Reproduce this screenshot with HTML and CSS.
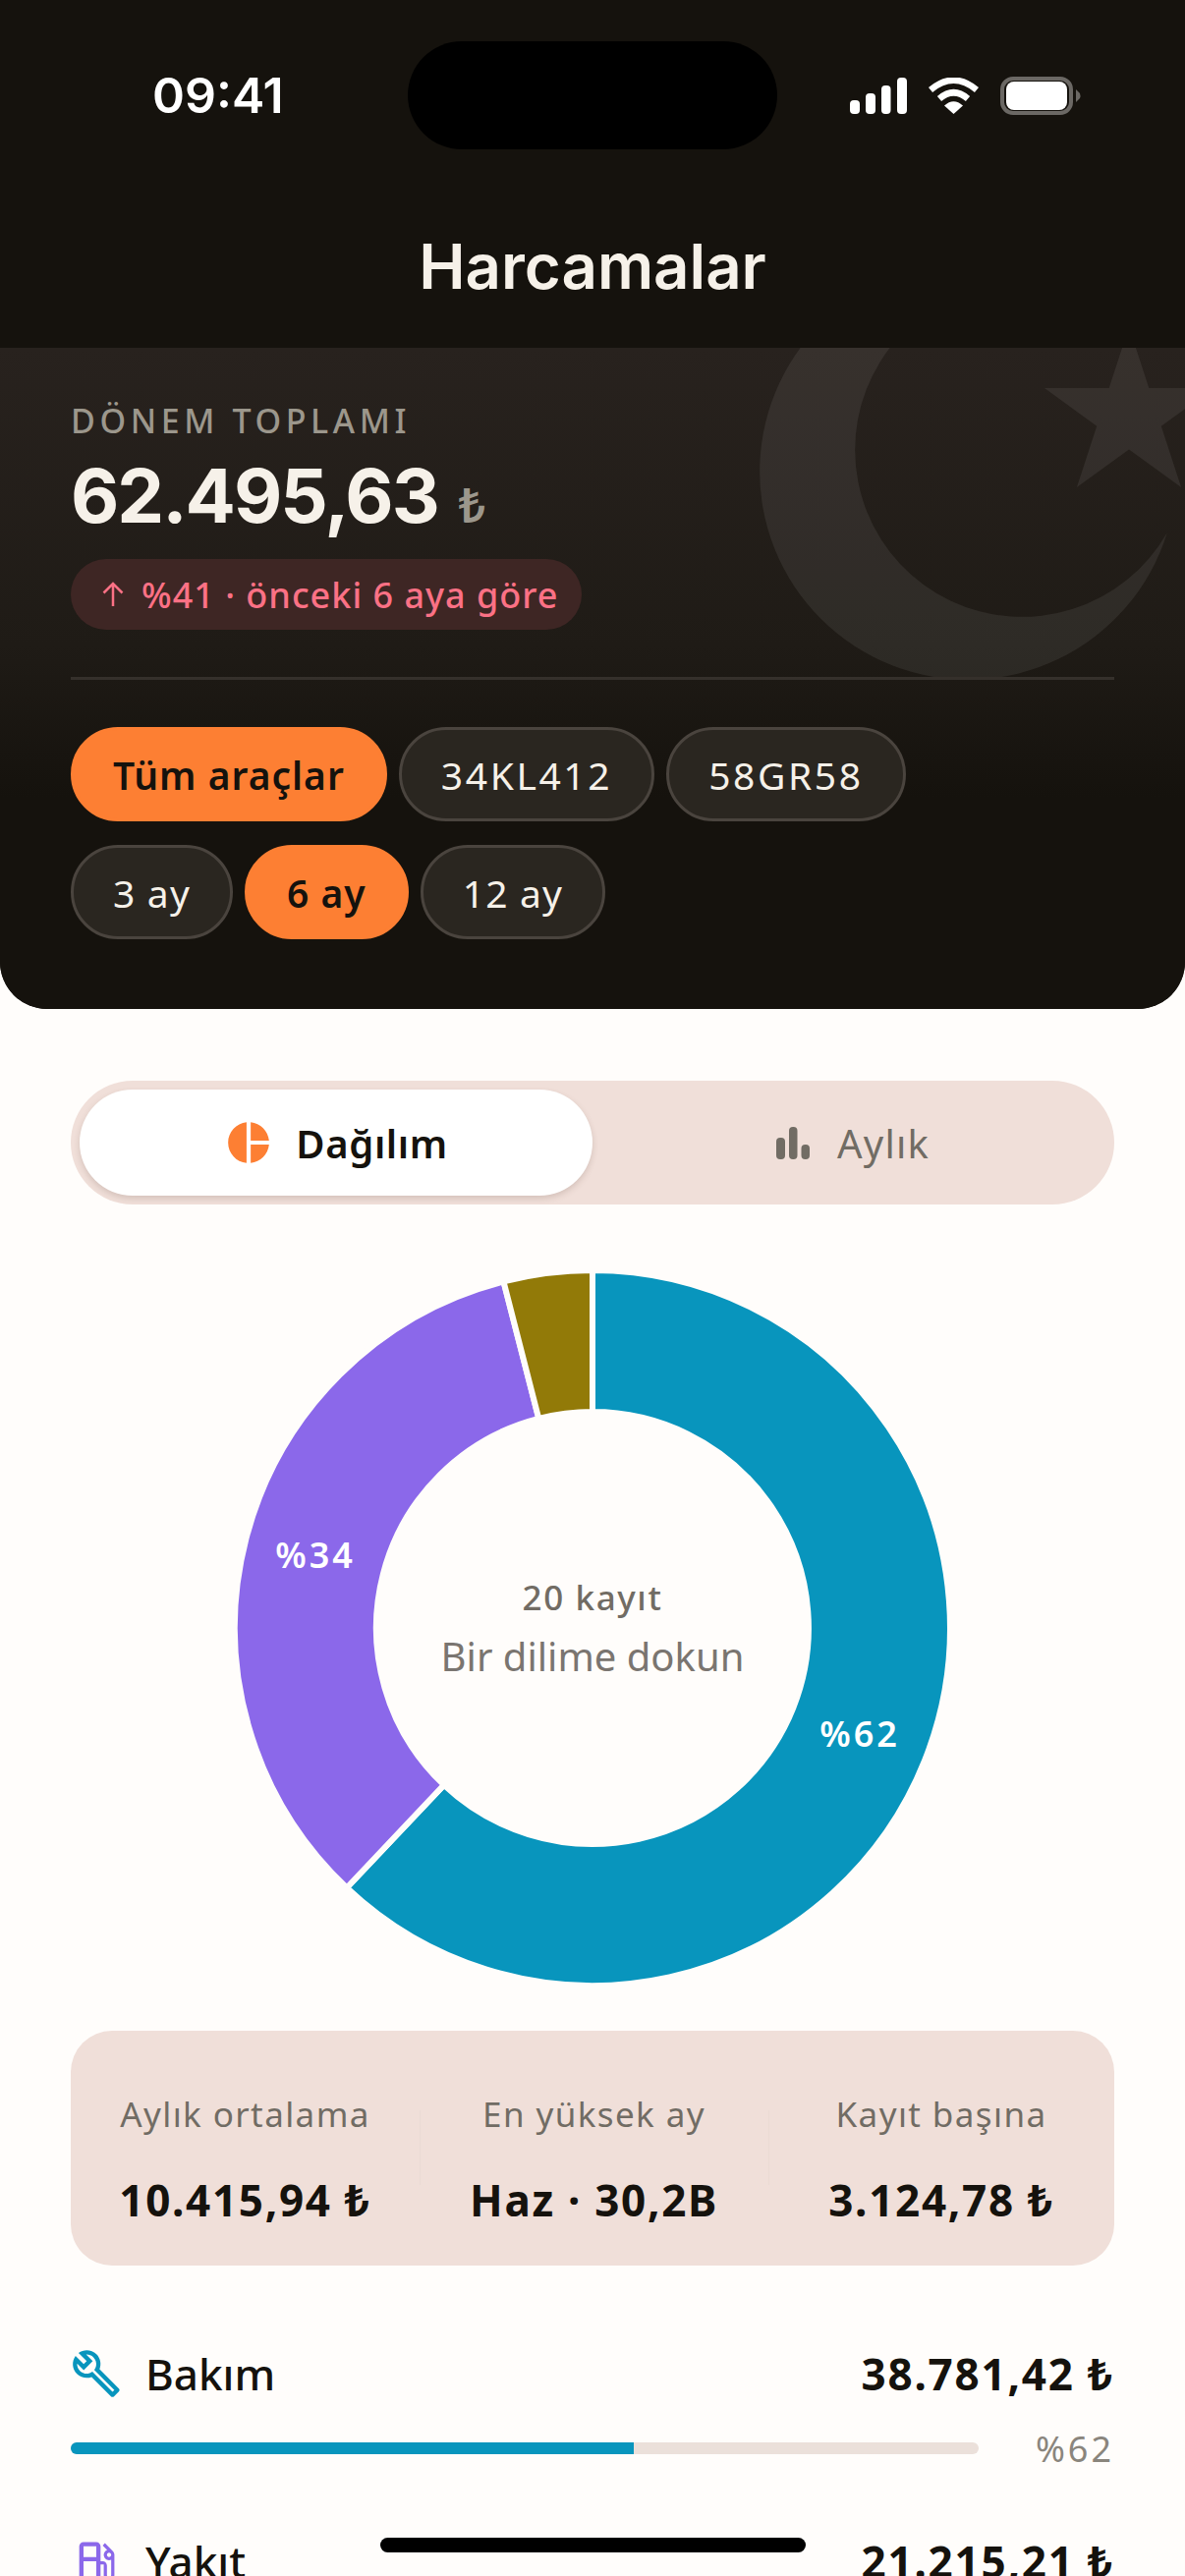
FILE: index.html
```html
<!DOCTYPE html>
<html lang="tr">
<head>
    <meta charset="UTF-8">
    <meta name="viewport" content="width=device-width, initial-scale=1.0">
    <title>Harcamalar</title>
    <link rel="stylesheet" href="styles.css">
</head>
<body>
<div class="screen">
    <header class="hero">
        <div class="status-bar">
            <span class="time">09:41</span>
            <div class="status-icons">
                <svg class="signal" viewBox="0 0 58 37" width="58" height="37">
                    <rect x="0" y="23" width="10" height="14" rx="4"/>
                    <rect x="16" y="16" width="10" height="21" rx="4"/>
                    <rect x="32" y="8" width="9.5" height="29" rx="4"/>
                    <rect x="48" y="0" width="10" height="37" rx="4"/>
                </svg>
                <svg class="wifi" viewBox="0 0 51 37" width="51" height="37">
                    <path d="M2 12.5Q25.5 -7 49 12.5" fill="none" stroke="#fff" stroke-width="6.5"/>
                    <path d="M11 21.5Q25.5 9 40 21.5" fill="none" stroke="#fff" stroke-width="6.5"/>
                    <path d="M25.5 37L16 28.5Q25.5 20 35 28.5Z" fill="#fff"/>
                </svg>
                <svg class="battery" viewBox="0 0 82 39" width="82" height="39">
                    <rect x="2" y="2" width="70" height="35" rx="11" fill="none" stroke="#6b6864" stroke-width="4"/>
                    <rect x="6" y="5" width="62" height="29" rx="8" fill="#fff"/>
                    <path d="M77 13l4 4q1 2.500 0 5l-4 4z" fill="#6b6864"/>
                </svg>
            </div>
        </div>
        <div class="island"></div>
        <h1 class="page-title">Harcamalar</h1>

        <section class="summary">
            <svg class="flag-mark" viewBox="0 0 1206 673" width="1206" height="673">
                <path d="M1187.800 188.200A212 212 0 1 1 1089 -59A170 170 0 1 0 1187.800 188.200Z"/>
                <polygon points="1149,-21.400 1169.300,41.100 1235,41.100 1181.800,79.700 1202.100,142.100 1149,103.500 1095.900,142.100 1116.200,79.700 1063,41.100 1128.700,41.100"/>
            </svg>
            <div class="eyebrow">DÖNEM TOPLAMI</div>
            <div class="total">62.495,63<span class="total-cur">₺</span></div>
            <div class="trend">
                <svg viewBox="0 0 26 26" width="26" height="26" fill="none" stroke="#fb7185" stroke-width="2.500">
                    <path d="M13 25V2M3.500 11.500L13 2l9.500 9.500"/>
                </svg>
                <span>%41 · önceki 6 aya göre</span>
            </div>
            <div class="divider"></div>
            <div class="chip-row">
                <span class="chip chip-active">Tüm araçlar</span>
                <span class="chip chip-plate">34KL412</span>
                <span class="chip chip-plate">58GR58</span>
            </div>
            <div class="chip-row">
                <span class="chip">3 ay</span>
                <span class="chip chip-active">6 ay</span>
                <span class="chip">12 ay</span>
            </div>
        </section>
    </header>

    <main class="content">
        <div class="segmented">
            <div class="segment segment-active">
                <svg viewBox="0 0 24 24" width="50" height="50" fill="#fd7f33">
                    <path d="M11 2v20c-5.070-.5-9-4.790-9-10s3.930-9.500 9-10zm2.030 0v8.990H22c-.47-4.740-4.240-8.520-8.970-8.990zm0 11.010V22c4.740-.47 8.500-4.250 8.970-8.990h-8.970z"/>
                </svg>
                <span>Dağılım</span>
            </div>
            <div class="segment">
                <svg viewBox="0 0 34 33" width="34" height="33" fill="#716c64">
                    <rect x="0" y="11" width="9" height="22" rx="4"/>
                    <rect x="13" y="0" width="8.500" height="33" rx="4"/>
                    <rect x="25.500" y="18" width="8.500" height="15" rx="4"/>
                </svg>
                <span>Aylık</span>
            </div>
        </div>

        <svg class="donut" viewBox="0 0 730 730" width="730" height="730">
            <path fill="#0895bd" d="M365 1A364 364 0 1 1 114.900 629.500L213.800 524.900A220 220 0 1 0 365 145Z"/>
            <path fill="#8b68ea" d="M114.900 629.500A364 364 0 0 1 274.500 12.400L310.300 151.900A220 220 0 0 0 213.800 524.900Z"/>
            <path fill="#927a08" d="M274.500 12.400A364 364 0 0 1 365 1L365 145A220 220 0 0 0 310.300 151.900Z"/>
            <text class="slice-label" x="637" y="472">%62</text>
            <text class="slice-label" x="83" y="290">%34</text>
            <text class="donut-count" x="365" y="333">20 kayıt</text>
            <text class="donut-hint" x="365" y="393">Bir dilime dokun</text>
        </svg>

        <div class="stats">
            <div class="stat">
                <div class="stat-label">Aylık ortalama</div>
                <div class="stat-value">10.415,94 ₺</div>
            </div>
            <div class="stat">
                <div class="stat-label">En yüksek ay</div>
                <div class="stat-value">Haz · 30,2B</div>
            </div>
            <div class="stat">
                <div class="stat-label">Kayıt başına</div>
                <div class="stat-value">3.124,78 ₺</div>
            </div>
        </div>

        <div class="category">
            <div class="category-head">
                <svg viewBox="0 0 24 24" width="52" height="52" fill="#0895bd">
                    <path d="M22.610 18.990l-9.080-9.080c.93-2.340.45-5.100-1.440-7C9.790.61 6.210.4 3.660 2.260L7.500 6.110 6.080 7.520 2.250 3.690C.39 6.230.6 9.820 2.900 12.110c1.860 1.860 4.570 2.350 6.890 1.480l9.110 9.110c.39.39 1.020.39 1.410 0l2.300-2.300c.4-.38.4-1.010 0-1.410zm-3 1.600l-9.460-9.460c-.61.45-1.290.72-2 .82-1.360.2-2.790-.21-3.830-1.250C3.370 9.760 2.930 8.500 3 7.260l3.090 3.090 4.240-4.240-3.090-3.090c1.240-.07 2.490.37 3.440 1.310 1.080 1.080 1.490 2.570 1.240 3.960-.12.71-.42 1.370-.88 1.960l9.450 9.450-.88.88z"/>
                </svg>
                <span class="category-name">Bakım</span>
                <span class="category-amount">38.781,42 ₺</span>
            </div>
            <div class="category-bar">
                <div class="track"><div class="fill" style="width: 62%"></div></div>
                <span class="category-pct">%62</span>
            </div>
        </div>

        <div class="category">
            <div class="category-head">
                <svg viewBox="0 0 24 24" width="52" height="52" fill="#8b68ea">
                    <path d="M19.770 7.230l.01-.01-3.720-3.720L15 4.560l2.110 2.110c-.94.36-1.610 1.260-1.610 2.330 0 1.380 1.120 2.500 2.500 2.500.36 0 .69-.08 1-.21v7.210c0 .55-.45 1-1 1s-1-.45-1-1V14c0-1.100-.9-2-2-2h-1V5c0-1.100-.9-2-2-2H6c-1.100 0-2 .9-2 2v16h10v-7.500h1.500v5c0 1.380 1.120 2.500 2.500 2.500s2.500-1.120 2.500-2.500V9c0-.69-.28-1.320-.73-1.770zM12 19H6v-7h6v7zm0-9H6V5h6v5zm6 0c-.55 0-1-.45-1-1s.45-1 1-1 1 .45 1 1-.45 1-1 1z"/>
                </svg>
                <span class="category-name">Yakıt</span>
                <span class="category-amount">21.215,21 ₺</span>
            </div>
        </div>
    </main>

    <div class="home-indicator"></div>
</div>
</body>
</html>
```
FILE: styles.css
```css
* {
    box-sizing: border-box;
}
body {
    margin: 0;
    background: #fffdfb;
    font-family: "Noto Sans", Arial, sans-serif;
    color: #15120d;
}
.screen {
    position: relative;
    width: 1206px;
    height: 2622px;
    overflow: hidden;
}

/* dark header */
.hero {
    position: relative;
    padding-top: 78px;
    background: #15120d;
    border-radius: 0 0 48px 48px;
    overflow: hidden;
}
.status-bar {
    display: flex;
    justify-content: space-between;
    align-items: center;
    height: 39px;
    padding: 0 106px 0 155px;
}
.time {
    font-family: Inter, sans-serif;
    font-size: 50px;
    font-weight: 600;
    line-height: 39px;
    color: #fff;
}
.status-icons {
    display: flex;
    align-items: center;
    gap: 22px;
}
.signal {
    fill: #fff;
}
.island {
    position: absolute;
    top: 42px;
    left: 415px;
    width: 376px;
    height: 110px;
    border-radius: 55px;
    background: #000;
}
.page-title {
    margin: 0;
    height: 237px;
    padding-top: 119px;
    text-align: center;
    font-family: Inter, sans-serif;
    font-size: 63.5px;
    font-weight: 600;
    line-height: 70px;
    color: #f6f1e9;
}

.summary {
    position: relative;
    padding: 54px 72px 71px;
    background: linear-gradient(180deg, #28221e 0%, #1f1b16 45%, #15120d 68%);
}
.flag-mark {
    position: absolute;
    top: 0;
    left: 0;
    fill: rgba(255, 255, 255, 0.07);
}
.eyebrow {
    position: relative;
    font-size: 34px;
    font-weight: 500;
    line-height: 40px;
    letter-spacing: 4.6px;
    color: #9c978c;
}
.total {
    position: relative;
    margin-top: 16px;
    font-family: Inter, sans-serif;
    font-size: 76px;
    font-weight: 700;
    line-height: 80px;
    letter-spacing: -2px;
    color: #f6f1e9;
}
.total-cur {
    margin-left: 21px;
    font-family: "Noto Sans", sans-serif;
    font-size: 48px;
    font-weight: 600;
    line-height: 1;
    letter-spacing: 0;
    color: #9c978c;
}
.trend {
    position: relative;
    display: flex;
    align-items: center;
    gap: 16px;
    width: fit-content;
    height: 72px;
    margin-top: 25px;
    padding: 0 24px 0 30px;
    border-radius: 36px;
    background: #3e2624;
    font-size: 36px;
    font-weight: 500;
    letter-spacing: 1px;
    color: #fb7185;
}
.divider {
    position: relative;
    height: 3px;
    margin: 48px 0;
    background: #35302b;
}
.chip-row {
    position: relative;
    display: flex;
    gap: 12px;
}
.chip-row + .chip-row {
    margin-top: 24px;
}
.chip {
    display: flex;
    align-items: center;
    height: 96px;
    padding: 0 40px;
    border: 3px solid #4a443e;
    border-radius: 48px;
    background: #2a2620;
    font-size: 39px;
    letter-spacing: 1.2px;
    color: #f6f1e9;
}
.chip-plate {
    letter-spacing: 2.6px;
}
.chip-active {
    border-color: #fd7f33;
    background: #fd7f33;
    color: #15120d;
    font-weight: 600;
    letter-spacing: 1px;
}

/* light content */
.content {
    padding: 73px 72px 0;
}
.segmented {
    display: flex;
    height: 126px;
    padding: 9px;
    border-radius: 63px;
    background: #f0dfd9;
}
.segment {
    flex: 1;
    display: flex;
    align-items: center;
    justify-content: center;
    gap: 28px;
    border-radius: 54px;
    font-size: 40px;
    letter-spacing: 1.2px;
    color: #716c64;
}
.segment svg {
    margin-left: 8px;
}
.segment-active {
    gap: 23px;
    background: #fff;
    box-shadow: 0 3px 6px rgba(90, 60, 50, 0.18);
    color: #15120d;
    font-weight: 600;
    letter-spacing: 0.6px;
}
.segment-active svg {
    margin-left: 0;
}
.donut {
    display: block;
    margin: 66px auto 0;
}
.donut path {
    stroke: #fffdfb;
    stroke-width: 6;
}
.donut text {
    text-anchor: middle;
    dominant-baseline: central;
}
.slice-label {
    font-size: 36px;
    font-weight: 600;
    letter-spacing: 3px;
    fill: #fff;
}
.donut-count {
    font-size: 35px;
    font-weight: 500;
    letter-spacing: 1.6px;
    fill: #716c64;
}
.donut-hint {
    font-size: 40px;
    fill: #7a7570;
}
.stats {
    display: grid;
    grid-template-columns: 355px 355px 352px;
    height: 239px;
    margin-top: 45px;
    padding-top: 65px;
    border-radius: 42px;
    background: #f0dfd9;
}
.stat {
    position: relative;
    text-align: center;
}
.stat + .stat::before {
    content: "";
    position: absolute;
    top: 16px;
    left: 0;
    width: 1px;
    height: 76px;
    background: #eadbd4;
}
.stat-label {
    font-size: 35px;
    line-height: 40px;
    letter-spacing: 1.4px;
    color: #716c64;
}
.stat-value {
    margin-top: 43px;
    font-size: 44px;
    font-weight: 700;
    line-height: 48px;
    letter-spacing: 1.7px;
}
.category {
    margin-top: 80px;
}
.category + .category {
    margin-top: 60px;
}
.category-head {
    display: flex;
    align-items: center;
    height: 60px;
}
.category-head svg {
    margin-right: 24px;
}
.category-name {
    flex: 1;
    font-size: 44px;
    font-weight: 500;
}
.category-amount {
    font-size: 44px;
    font-weight: 700;
    letter-spacing: 1.8px;
}
.category-bar {
    display: flex;
    align-items: center;
    justify-content: space-between;
    height: 50px;
    margin-top: 21px;
}
.track {
    width: 924px;
    height: 12px;
    border-radius: 6px;
    background: #ebe0da;
    overflow: hidden;
}
.fill {
    height: 100%;
    background: #0895bd;
}
.category-pct {
    font-size: 36px;
    letter-spacing: 3px;
    color: #8a857d;
}
.home-indicator {
    position: absolute;
    left: 387px;
    top: 2583px;
    width: 433px;
    height: 15px;
    border-radius: 8px;
    background: #000;
}
```
